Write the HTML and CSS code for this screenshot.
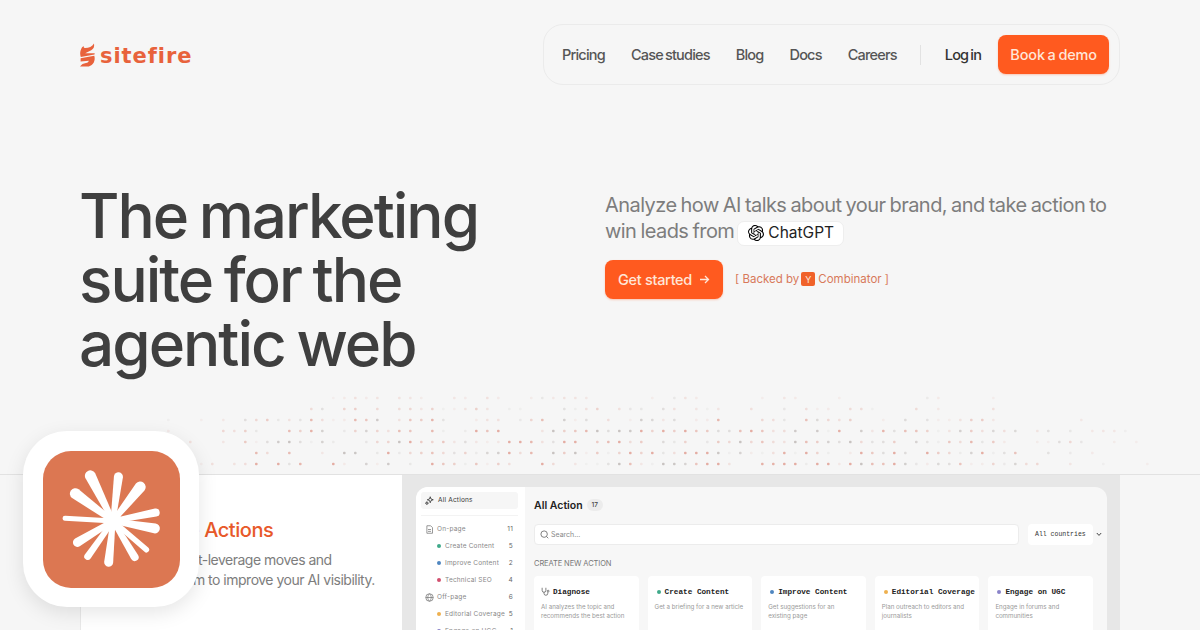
FILE: index.html
```html
<!DOCTYPE html>
<html>
<head>
    <meta charset="utf-8" />
    <title>sitefire</title>
    <link rel="stylesheet" href="styles.css">
</head>
<body>
    <div class="header">
        <a class="logo">
            <svg class="logo-mark" width="15" height="24" viewBox="0 0 15 24">
                <path d="M14 0.5C14.6 3.8 13.6 6 11.2 7.2L5.2 10.2 14.4 10.2C14.8 10.2 14.8 10.8 14.5 11.4L0.8 14C0 11.6 0 9.4 0.6 7.6 1.3 5.2 2.4 3.6 3.6 3 3.6 4.2 4 4.9 4.8 5.1 8.6 5.2 12.2 3.6 14 0.5Z" />
                <path d="M0.6 15.2L14.3 12.8C15 15 14.8 17.4 13.8 19.4 12.8 21.4 10.8 22.6 8.8 23.4L0 23.6C1.4 21.4 3.4 20.4 6 20 7.6 19.8 8.6 19 8.8 17.8L0.6 18.4Z" />
            </svg>
            <span class="logo-text">sitefire</span>
        </a>
        <div class="nav">
            <a>Pricing</a>
            <a>Case studies</a>
            <a>Blog</a>
            <a>Docs</a>
            <a>Careers</a>
            <span class="nav-divider"></span>
            <a class="login">Log in</a>
            <a class="btn btn-nav">Book a demo</a>
        </div>
    </div>

    <div class="hero">
        <h1>The marketing<br>suite for the<br>agentic web</h1>
        <div class="hero-side">
            <p class="lead">Analyze how AI talks about your brand, and take action to<br>win leads from <span class="chip">
                <svg width="16" height="16" viewBox="0 0 24 24"><path d="M22.2819 9.8211a5.9847 5.9847 0 0 0-.5157-4.9108 6.0462 6.0462 0 0 0-6.5098-2.9A6.0651 6.0651 0 0 0 4.9807 4.1818a5.9847 5.9847 0 0 0-3.9977 2.9 6.0462 6.0462 0 0 0 .7427 7.0966 5.98 5.98 0 0 0 .511 4.9107 6.051 6.051 0 0 0 6.5146 2.9001A5.9847 5.9847 0 0 0 13.2599 24a6.0557 6.0557 0 0 0 5.7718-4.2058 5.9894 5.9894 0 0 0 3.9977-2.9001 6.0557 6.0557 0 0 0-.7475-7.0729zm-9.022 12.6081a4.4755 4.4755 0 0 1-2.8764-1.0408l.1419-.0804 4.7783-2.7582a.7948.7948 0 0 0 .3927-.6813v-6.7369l2.02 1.1686a.071.071 0 0 1 .038.052v5.5826a4.504 4.504 0 0 1-4.4945 4.4944zm-9.6607-4.1254a4.4708 4.4708 0 0 1-.5346-3.0137l.142.0852 4.783 2.7582a.7712.7712 0 0 0 .7806 0l5.8428-3.3685v2.3324a.0804.0804 0 0 1-.0332.0615L9.74 19.9502a4.4992 4.4992 0 0 1-6.1408-1.6464zM2.3408 7.8956a4.485 4.485 0 0 1 2.3655-1.9728V11.6a.7664.7664 0 0 0 .3879.6765l5.8144 3.3543-2.0201 1.1685a.0757.0757 0 0 1-.071 0l-4.8303-2.7865A4.504 4.504 0 0 1 2.3408 7.872zm16.5963 3.8558L13.1038 8.364 15.1192 7.2a.0757.0757 0 0 1 .071 0l4.8303 2.7913a4.4944 4.4944 0 0 1-.6765 8.1042v-5.6772a.79.79 0 0 0-.407-.667zm2.0107-3.0231l-.142-.0852-4.7735-2.7818a.7759.7759 0 0 0-.7854 0L9.409 9.2297V6.8974a.0662.0662 0 0 1 .0284-.0615l4.8303-2.7866a4.4992 4.4992 0 0 1 6.6802 4.66zM8.3065 12.863l-2.02-1.1638a.0804.0804 0 0 1-.038-.0567V6.0742a4.4992 4.4992 0 0 1 7.3757-3.4537l-.142.0805L8.704 5.459a.7948.7948 0 0 0-.3927.6813zm1.0976-2.3654l2.602-1.4998 2.6069 1.4998v2.9994l-2.5974 1.4997-2.6067-1.4997Z"/></svg>
                ChatGPT</span></p>
            <div class="cta-row">
                <a class="btn btn-cta">Get started
                    <svg width="11" height="11" viewBox="0 0 11 11" fill="none" stroke="currentColor" stroke-width="1.3"><path d="M1 5.5H9.5M6 2l3.5 3.5L6 9"/></svg>
                </a>
                <span class="backed">[ Backed by <i class="yc">Y</i> Combinator ]</span>
            </div>
        </div>
    </div>

    <div class="dots" id="dots"></div>

    <div class="showcase">
        <div class="app-icon">
            <div class="app-icon-inner">
                <svg width="137" height="137" viewBox="-70 -70 137 137" fill="#fff">
                    <circle cx="0" cy="0" r="9"/>
                    <path transform="rotate(-26.6)" d="M-2.500 0L-5.500 -50.500A5.500 5.500 0 0 1 5.500 -50.500L2.500 0Z"/>
                    <path transform="rotate(7)" d="M-2.500 0L-4.500 -44.500A4.500 4.500 0 0 1 4.500 -44.500L2.500 0Z"/>
                    <path transform="rotate(38.7)" d="M-2.500 0L-5.500 -43.500A5.500 5.500 0 0 1 5.500 -43.500L2.500 0Z"/>
                    <path transform="rotate(78.7)" d="M-2.500 0L-4 -43.500A4 4 0 0 1 4 -43.500L2.500 0Z"/>
                    <path transform="rotate(100)" d="M-2.500 0L-5 -42.500A5 5 0 0 1 5 -42.500L2.500 0Z"/>
                    <path transform="rotate(130.700)" d="M-2.500 0L-2.800 -44A2.800 2.800 0 0 1 2.800 -44L2.500 0Z"/>
                    <path transform="rotate(149)" d="M-2.500 0L-4 -42A4 4 0 0 1 4 -42L2.500 0Z"/>
                    <path transform="rotate(186)" d="M-2.500 0L-4.500 -41.500A4.500 4.500 0 0 1 4.500 -41.500L2.500 0Z"/>
                    <path transform="rotate(215.5)" d="M-2.500 0L-3.500 -43.500A3.500 3.500 0 0 1 3.500 -43.500L2.500 0Z"/>
                    <path transform="rotate(239)" d="M-2.500 0L-4.500 -41.500A4.500 4.500 0 0 1 4.500 -41.500L2.500 0Z"/>
                    <path transform="rotate(273.4)" d="M-2.500 0L-2.500 -48A2.500 2.500 0 0 1 2.500 -48L2.500 0Z"/>
                    <path transform="rotate(306)" d="M-2.500 0L-5.500 -46.500A5.500 5.500 0 0 1 5.500 -46.500L2.500 0Z"/>
                </svg>
            </div>
        </div>

        <div class="feature">
            <h2>Execute Actions</h2>
            <p>Your highest-leverage moves and<br>lean on them to improve your AI visibility.</p>
        </div>

        <div class="panel">
            <div class="window">
                <div class="sidebar">
                    <div class="side-top">
                        <svg width="9" height="9" viewBox="0 0 12 12" fill="none" stroke="#444" stroke-width="1.2"><path d="M7 1l1 3 3 1-3 1-1 3-1-3-3-1 3-1zM2.500 7.500l.6 1.500 1.500.6-1.500.6-.6 1.300-.6-1.300L.5 9.600l1.400-.6z"/></svg>
                        All Actions
                    </div>
                    <div class="side-rule"></div>
                    <div class="side-row">
                        <span class="side-label"><svg width="9" height="9" viewBox="0 0 12 12" fill="none" stroke="#777"><path d="M2.500 1h5l2.500 2.500V11h-7.500zM4 6h4M4 8.500h4"/></svg>On-page</span><span class="side-count">11</span>
                    </div>
                    <div class="side-row sub">
                        <span class="side-label"><i class="dot green"></i>Create Content</span><span class="side-count">5</span>
                    </div>
                    <div class="side-row sub">
                        <span class="side-label"><i class="dot blue"></i>Improve Content</span><span class="side-count">2</span>
                    </div>
                    <div class="side-row sub">
                        <span class="side-label"><i class="dot red"></i>Technical SEO</span><span class="side-count">4</span>
                    </div>
                    <div class="side-row">
                        <span class="side-label"><svg width="9" height="9" viewBox="0 0 12 12" fill="none" stroke="#777"><circle cx="6" cy="6" r="5"/><path d="M1 6h10M6 1c-3 3-3 7 0 10M6 1c3 3 3 7 0 10"/></svg>Off-page</span><span class="side-count">6</span>
                    </div>
                    <div class="side-row sub">
                        <span class="side-label"><i class="dot amber"></i>Editorial Coverage</span><span class="side-count">5</span>
                    </div>
                    <div class="side-row sub">
                        <span class="side-label"><i class="dot violet"></i>Engage on UGC</span><span class="side-count">1</span>
                    </div>
                </div>

                <div class="content">
                    <div class="content-title">All Action <span class="badge">17</span></div>
                    <div class="filter-row">
                        <div class="search">
                            <svg width="9" height="9" viewBox="0 0 12 12" fill="none" stroke="#666" stroke-width="1.100"><circle cx="5.500" cy="5.500" r="4.300"/><path d="M8.700 8.700L11 11"/></svg>
                            Search...
                        </div>
                        <div class="select">All countries</div>
                        <svg class="chevron" width="6" height="5" viewBox="0 0 6 5" fill="none" stroke="#444"><path d="M.8 1l2.200 2.400L5.200 1"/></svg>
                    </div>
                    <div class="section-label">CREATE NEW ACTION</div>
                    <div class="cards">
                        <div class="card">
                            <div class="card-title"><svg width="9" height="9" viewBox="0 0 12 12" fill="none" stroke="#555"><path d="M1.500 1v3.500a2.500 2.500 0 0 0 5 0V1M4 7v1.500a2.500 2.500 0 0 0 5 0V7"/><circle cx="9.500" cy="5.500" r="1.200"/></svg>Diagnose</div>
                            <p>AI analyzes the topic and<br>recommends the best action</p>
                        </div>
                        <div class="card">
                            <div class="card-title"><i class="dot green"></i>Create Content</div>
                            <p>Get a briefing for a new article</p>
                        </div>
                        <div class="card">
                            <div class="card-title"><i class="dot blue"></i>Improve Content</div>
                            <p>Get suggestions for an<br>existing page</p>
                        </div>
                        <div class="card">
                            <div class="card-title"><i class="dot amber"></i>Editorial Coverage</div>
                            <p>Plan outreach to editors and<br>journalists</p>
                        </div>
                        <div class="card">
                            <div class="card-title"><i class="dot violet"></i>Engage on UGC</div>
                            <p>Engage in forums and<br>communities</p>
                        </div>
                    </div>
                </div>
            </div>
        </div>
    </div>

    <script src="dots.js"></script>
</body>
</html>
```

FILE: styles.css
```css
* { margin: 0; border: 0; padding: 0; box-sizing: border-box; }

body {
    width: 1200px;
    height: 630px;
    overflow: hidden;
    background: #f6f6f6;
    font-family: "Inter", "Liberation Sans", sans-serif;
    color: #3f3f3f;
}

/* header */
.header {
    display: flex;
    justify-content: space-between;
    align-items: center;
    padding: 24px 80px;
}

.logo {
    display: flex;
    align-items: center;
    gap: 5px;
    color: #e8623c;
}

.logo-mark { fill: #e8623c; }

.logo-text {
    margin-top: 2px;
    font-family: "DejaVu Sans", sans-serif;
    font-size: 21px;
    font-weight: 700;
    letter-spacing: 0.95px;
    line-height: 26px;
}

.nav {
    display: flex;
    align-items: center;
    width: 577px;
    height: 61px;
    padding: 0 10px 0 18px;
    border: 1px solid #ebebeb;
    border-radius: 20px;
    font-size: 14.5px;
    font-weight: 500;
    letter-spacing: -0.8px;
    word-spacing: -1px;
    color: #555;
}

.nav a { margin-right: 26px; white-space: nowrap; flex-shrink: 0; }

.nav-divider {
    flex-shrink: 0;
    width: 1px;
    height: 20px;
    margin: 0 24px 0 -3px;
    background: #e2e2e2;
}

.nav .login { color: #333; margin-right: 17px; }

.btn {
    display: flex;
    align-items: center;
    justify-content: center;
    flex-shrink: 0;
    background: #ff5a1f;
    color: #ffe6d8;
    border-radius: 8px;
    font-weight: 500;
    box-shadow: 0 1px 2px rgba(255, 90, 31, 0.3);
}

.nav .btn-nav { width: 111px; height: 39px; margin-right: 0; letter-spacing: -0.15px; }

/* hero */
.hero {
    display: grid;
    grid-template-columns: 525px 1fr;
    padding: 75px 80px 15.5px;
}

h1 {
    margin-left: -1px;
    font-size: 62px;
    font-weight: 500;
    line-height: 64px;
    letter-spacing: -2px;
    word-spacing: -3px;
    color: #3f3f3f;
}

.hero-side { padding-top: 8px; }

.lead {
    font-size: 20px;
    line-height: 26px;
    letter-spacing: -0.56px;
    word-spacing: -1px;
    color: #7d7d7d;
    white-space: nowrap;
}

.chip {
    display: inline-flex;
    align-items: center;
    gap: 4px;
    height: 25px;
    margin-left: -1px;
    padding: 0 9px 0 10px;
    vertical-align: -3px;
    background: #fff;
    border: 1px solid #eee;
    border-radius: 7px;
    font-size: 15.5px;
    letter-spacing: 0;
    word-spacing: 0;
    color: #222;
}

.cta-row {
    display: flex;
    align-items: center;
    gap: 12px;
    margin-top: 14px;
}

.btn-cta {
    width: 118px;
    height: 39px;
    gap: 7px;
    font-size: 14.5px;
    letter-spacing: -0.3px;
}

.backed {
    display: flex;
    align-items: center;
    gap: 3px;
    font-size: 11.5px;
    color: #d8795a;
}

.yc {
    display: flex;
    align-items: center;
    justify-content: center;
    width: 14px;
    height: 14px;
    margin-left: -1px;
    background: #f0622a;
    border-radius: 2px;
    font-style: normal;
    font-size: 9px;
    color: #ffe6d8;
}

/* dot field */
.dots {
    height: 82px;
}

.dots svg { display: block; }

/* showcase */
.showcase {
    position: relative;
    display: flex;
    height: 156px;
    padding-left: 80px;
    border-top: 1px solid #e2e2e2;
}

.app-icon {
    position: absolute;
    left: 23px;
    top: -44px;
    z-index: 2;
    width: 176px;
    height: 176px;
    padding: 20px 19px 19px 20px;
    background: #fff;
    border-radius: 44px;
    box-shadow: 0 6px 20px rgba(0, 0, 0, 0.1);
}

.app-icon-inner {
    height: 137px;
    background: #dc7752;
    border-radius: 28px;
}

.feature {
    width: 322px;
    padding: 43px 0 0 44px;
    background: #fff;
    border-left: 1px solid #e9e9e9;
}

.feature h2 {
    margin-left: 1px;
    font-size: 20px;
    font-weight: 500;
    line-height: 24px;
    letter-spacing: -0.45px;
    color: #e8592a;
}

.feature p {
    margin-top: 8px;
    font-size: 14px;
    line-height: 20px;
    letter-spacing: -0.5px;
    color: #7d7d7d;
    white-space: nowrap;
}

.panel {
    width: 718px;
    padding: 12px 13px 0 14px;
    background: #e7e7e7;
}

.window {
    display: flex;
    height: 160px;
    background: #f7f7f7;
    border-radius: 12px 12px 0 0;
    overflow: hidden;
}

.sidebar {
    width: 109px;
    flex-shrink: 0;
    padding: 5px 7px 0 5px;
    background: #fff;
    font-size: 6.5px;
    letter-spacing: 0.2px;
    color: #888;
}

.side-top {
    display: flex;
    align-items: center;
    gap: 4px;
    height: 17px;
    padding-left: 4px;
    background: #f6f6f6;
    border-radius: 3px;
    color: #333;
}

.side-rule {
    height: 1px;
    margin: 6px 0 5px;
    background: #f3f3f3;
}

.side-row {
    display: flex;
    justify-content: space-between;
    align-items: center;
    height: 17px;
    padding: 0 5px;
}

.side-row.sub { padding-left: 16px; }

.side-label {
    display: flex;
    align-items: center;
    gap: 3px;
}

.side-count { color: #666; }

.side-row:not(.sub) .side-label { gap: 3px; margin-left: -1px; }

.dot {
    display: inline-block;
    flex-shrink: 0;
    width: 4px;
    height: 4px;
    margin-right: 1px;
    border-radius: 50%;
}

.dot.green { background: #3fa98a; }
.dot.blue { background: #4f86c0; }
.dot.red { background: #d2506f; }
.dot.amber { background: #eeb04f; }
.dot.violet { background: #8a83c9; }

.content {
    flex: 1;
    padding: 0 4px 0 9px;
}

.content-title {
    display: flex;
    align-items: center;
    gap: 4px;
    height: 37px;
    font-size: 10.5px;
    font-weight: 600;
    color: #222;
}

.badge {
    display: flex;
    align-items: center;
    justify-content: center;
    width: 16px;
    height: 12px;
    background: #ececec;
    border-radius: 6px;
    font-size: 6.5px;
    font-weight: 500;
    color: #444;
}

.filter-row {
    display: flex;
    align-items: center;
    height: 21px;
}

.search {
    display: flex;
    align-items: center;
    gap: 2px;
    width: 485px;
    height: 21px;
    padding-left: 5px;
    background: #fff;
    border: 1px solid #ececec;
    border-radius: 4px;
    font-size: 7px;
    color: #888;
}

.select {
    display: flex;
    align-items: center;
    width: 65px;
    height: 21px;
    margin-left: 9px;
    padding-left: 7px;
    background: #fff;
    border-radius: 4px;
    font-family: "Liberation Mono", monospace;
    font-size: 6.5px;
    color: #333;
}

.chevron { margin-left: 3px; }

.section-label {
    margin-top: 14px;
    font-size: 7.5px;
    line-height: 10px;
    letter-spacing: -0.1px;
    color: #777;
}

.cards {
    display: grid;
    grid-template-columns: repeat(5, 104.6px);
    column-gap: 9px;
    margin-top: 7px;
}

.card {
    height: 80px;
    padding: 11px 7px;
    background: #fff;
    border-radius: 4px;
}

.card-title {
    display: flex;
    align-items: center;
    gap: 2px;
    font-family: "Liberation Mono", monospace;
    font-size: 7.7px;
    font-weight: 700;
    line-height: 10px;
    color: #222;
    white-space: nowrap;
}

.card-title .dot { margin: 0 2px 0 2px; }

.card-title svg { margin-right: 1px; }

.card p {
    margin-top: 5px;
    font-size: 6.2px;
    line-height: 9.5px;
    color: #999;
    white-space: nowrap;
}
```

FILE: dots.js
```js
// dot field above the showcase, seeded so that it stays the same on each load
let seed = 20;
function rand() {
    seed = (seed * 1664525 + 1013904223) % 4294967296;
    return seed / 4294967296;
}

const ns = 'http://www.w3.org/2000/svg';
const svg = document.createElementNS(ns, 'svg');
svg.setAttribute('width', 1200);
svg.setAttribute('height', 82);

const rowFade = [0.2, 0.35, 0.6, 0.8, 1, 1, 1];

for (let r = 0; r < 7; r++) {
    for (let x = 156; x < 1180; x += 11) {
        // strongest through the middle, fading at both ends
        const edge = Math.min((x - 130) / 200, (1170 - x) / 300, 1);
        if (r < 2 && (x < 300 || x > 1000)) continue;
        const v = Math.pow(rand(), 1.5) * 1.1 * rowFade[r] * Math.max(edge, 0);
        if (v < 0.08) continue;

        const dot = document.createElementNS(ns, 'rect');
        dot.setAttribute('x', x);
        dot.setAttribute('y', 4.7 + r * 11);
        dot.setAttribute('width', 2.6);
        dot.setAttribute('height', 2.6);
        dot.setAttribute('rx', 1);
        dot.setAttribute('fill', rand() > 0.35 ? '#dd8f80' : '#b5aeab');
        dot.setAttribute('opacity', Math.min(v, 0.7).toFixed(2));
        svg.appendChild(dot);
    }
}

document.querySelector('#dots').appendChild(svg);
```
